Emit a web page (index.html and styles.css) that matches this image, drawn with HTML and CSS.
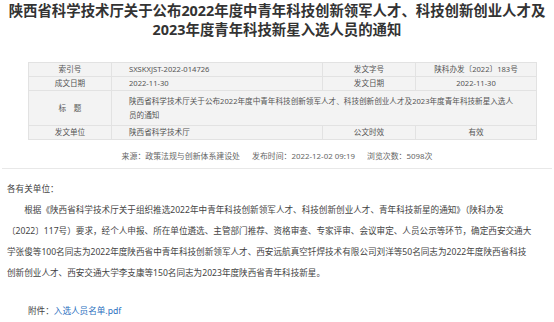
FILE: index.html
```html
<!DOCTYPE html>
<html lang="zh-CN">
<head>
	<meta charset="UTF-8">
	<meta name="viewport" content="width=device-width, initial-scale=1.0">
	<title>陕西省科学技术厅关于公布2022年度中青年科技创新领军人才、科技创新创业人才及2023年度青年科技新星入选人员的通知</title>
	<link rel="stylesheet" href="styles.css">
</head>
<body>
	<div class="article">
		<h1 class="title">陕西省科学技术厅关于公布2022年度中青年科技创新领军人才、科技创新创业人才及2023年度青年科技新星入选人员的通知</h1>

		<table class="info">
			<tr>
				<th>索引号</th>
				<td>SXSKXJST-2022-014726</td>
				<th>发文字号</th>
				<td class="center">陕科办发〔2022〕183号</td>
			</tr>
			<tr>
				<th>成文日期</th>
				<td>2022-11-30</td>
				<th>发文日期</th>
				<td class="center">2022-11-30</td>
			</tr>
			<tr class="tall">
				<th>标　题</th>
				<td colspan="3">陕西省科学技术厅关于公布2022年度中青年科技创新领军人才、科技创新创业人才及2023年度青年科技新星入选人员的通知</td>
			</tr>
			<tr>
				<th>发文单位</th>
				<td>陕西省科学技术厅</td>
				<th>公文时效</th>
				<td class="center">有效</td>
			</tr>
		</table>

		<div class="source">
			<span>来源：政策法规与创新体系建设处</span>
			<span>发布时间：2022-12-02 09:19</span>
			<span>浏览次数：5098次</span>
		</div>

		<div class="content">
			<p class="greeting">各有关单位：</p>
			<p class="text">根据《陕西省科学技术厅关于组织推选2022年中青年科技创新领军人才、科技创新创业人才、青年科技新星的通知》（陕科办发〔2022〕117号）要求，经个人申报、所在单位遴选、主管部门推荐、资格审查、专家评审、会议审定、人员公示等环节，确定西安交通大学张俊等100名同志为2022年度陕西省中青年科技创新领军人才、西安远航真空钎焊技术有限公司刘洋等50名同志为2022年度陕西省科技创新创业人才、西安交通大学李支康等150名同志为2023年度陕西省青年科技新星。</p>
			<p class="attach">附件：<a href="#">入选人员名单.pdf</a></p>
		</div>
	</div>
</body>
</html>
```

FILE: styles.css
```css
body {
	margin: 0;
	padding: 0;
	background-color: #fff;
	font-family: "Noto Sans", "Noto Sans CJK SC", sans-serif;
	color: #333;
}
.article {
	width: 554px;
}
.title {
	margin: 0;
	padding: 2px 6px 0 6px;
	font-size: 14.4px;
	line-height: 18.5px;
	font-weight: bold;
	text-align: center;
	color: #333;
}
.info {
	width: 504px;
	margin: 23px 0 0 28px;
	border-collapse: collapse;
	background-color: #f3f3f3;
	font-size: 7.6px;
	color: #555;
	table-layout: fixed;
}
.info th, .info td {
	border: 1px solid #e2e2e2;
	height: 13px;
	padding: 0;
	line-height: 13px;
	font-weight: normal;
}
.info th {
	text-align: center;
}
.info th:first-child {
	width: 82px;
}
.info td {
	text-align: left;
	padding-left: 17px;
	width: 193px;
}
.info th:nth-child(3) {
	width: 92px;
}
.info td.center {
	width: 120px;
	padding-left: 0;
	text-align: center;
}
.info tr.tall td, .info tr.tall th {
	height: 34px;
	line-height: 14px;
}
.info tr.tall td {
	padding-right: 20px;
}
.source {
	margin: 9px 2px 0 2px;
	padding-bottom: 5px;
	border-bottom: 1px solid #e8e8e8;
	text-align: center;
	font-size: 7.9px;
	line-height: 14px;
	color: #666;
}
.source span {
	margin: 0 5px;
}
.content {
	padding: 0 22px 0 7px;
	font-size: 8.6px;
	color: #444;
}
.content p {
	margin: 0;
	line-height: 21px;
}
.greeting {
	padding-top: 10px;
}
.text {
	text-indent: 2em;
}
.attach {
	margin-top: 17px !important;
	padding-left: 21px;
}
.attach a {
	color: #2a6fc0;
	text-decoration: none;
}
```
